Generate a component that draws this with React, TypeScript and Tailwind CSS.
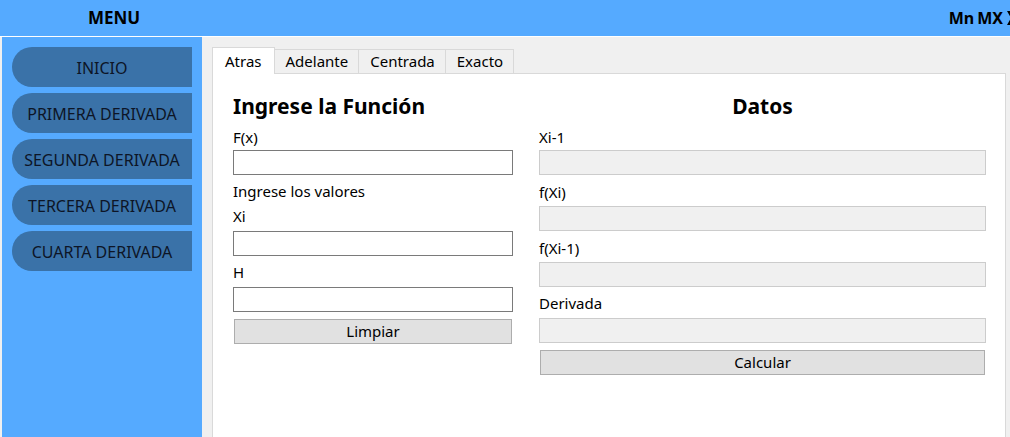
import React from "react";

const font = { fontFamily: '"Noto Sans", "Open Sans", sans-serif' };

function Field({ label, mt, labelMt, readOnly }: { label: string; mt: string; labelMt: string; readOnly?: boolean }) {
  return (
    <>
      <div className={`h-[22px] leading-[22px] text-[15px] text-black ${labelMt}`}>{label}</div>
      <div
        className={`h-[25px] ${mt} ${readOnly ? "bg-[#f0f0f0] border border-[#cccccc]" : "bg-white border border-[#7a7a7a]"}`}
      />
    </>
  );
}

export default function App() {
  const menu = ["INICIO", "PRIMERA DERIVADA", "SEGUNDA DERIVADA", "TERCERA DERIVADA", "CUARTA DERIVADA"];
  const tabs = ["Atras", "Adelante", "Centrada", "Exacto"];
  return (
    <div className="w-[1010px] h-[437px] overflow-hidden flex flex-col bg-[#f0f0f0]" style={font}>
      {/* header */}
      <div className="h-[36px] bg-[#55aaff] flex items-center shrink-0 overflow-hidden">
        <div className="w-[228px] text-center font-bold text-[17px] text-black">MENU</div>
        <div className="flex-1" />
        <div className="flex items-center gap-[3px] font-bold text-[16px] text-black whitespace-nowrap mr-[-5px]">
          <span>Mn</span>
          <span>MX</span>
          <svg width="8" height="16" viewBox="0 0 8 16" className="ml-px shrink-0">
            <path d="M0 1 L4 1 L8 8 L4 15 L0 15 L4 8 Z" fill="#000" />
          </svg>
        </div>
      </div>
      <div className="h-px bg-white shrink-0" />
      {/* body */}
      <div className="flex-1 flex min-h-0">
        <div className="w-[2px] bg-[#f0f0f0]" />
        <div className="w-[200px] bg-[#55aaff] pt-[10px] pl-[10px] flex flex-col gap-[6px]">
          {menu.map((m) => (
            <div
              key={m}
              className="w-[180px] h-[40px] pt-px rounded-l-[20px] bg-[#3a72a8] flex items-center justify-center text-[16px] text-[#0d1526]"
            >
              {m}
            </div>
          ))}
        </div>
        <div className="flex-1 pl-[10px] pt-[10px] pr-[4px] flex flex-col">
          {/* tabs */}
          <div className="flex items-end h-[26px] relative z-10">
            {tabs.map((t, i) =>
              i === 0 ? (
                <div
                  key={t}
                  className="h-[27px] px-[12px] bg-white border border-b-0 border-[#d9d9d9] flex items-center text-[15px] text-black -mb-px"
                >
                  {t}
                </div>
              ) : (
                <div
                  key={t}
                  className="h-[24px] pl-[11px] pr-[10px] bg-[#f0f0f0] border border-l-0 border-b-0 border-[#d9d9d9] flex items-center text-[15px] text-black"
                >
                  {t}
                </div>
              )
            )}
          </div>
          {/* panel */}
          <div className="flex-1 bg-white border border-[#d9d9d9] border-b-0 pl-[20px] pr-[19px] pt-[20px] flex gap-[26px]">
            <div className="w-[280px] flex flex-col">
              <div className="h-[24px] leading-[24px] font-bold text-[21px] text-black">Ingrese la Función</div>
              <Field label="F(x)" labelMt="mt-[8px]" mt="mt-[2px]" />
              <div className="h-[22px] leading-[22px] text-[15px] text-black mt-[5px]">Ingrese los valores</div>
              <Field label="Xi" labelMt="mt-[3px]" mt="mt-[4px]" />
              <Field label="H" labelMt="mt-[5px]" mt="mt-[4px]" />
              <div className="mt-[7px] mx-px h-[25px] bg-[#e1e1e1] border border-[#adadad] flex items-center justify-center text-[15px] text-black">
                Limpiar
              </div>
            </div>
            <div className="flex-1 flex flex-col">
              <div className="h-[24px] leading-[24px] font-bold text-[21px] text-black text-center">Datos</div>
              <Field label="Xi-1" labelMt="mt-[8px]" mt="mt-[2px]" readOnly />
              <Field label="f(Xi)" labelMt="mt-[6px]" mt="mt-[3px]" readOnly />
              <Field label="f(Xi-1)" labelMt="mt-[6px]" mt="mt-[3px]" readOnly />
              <Field label="Derivada" labelMt="mt-[5px]" mt="mt-[4px]" readOnly />
              <div className="mt-[7px] mx-px h-[25px] bg-[#e1e1e1] border border-[#adadad] flex items-center justify-center text-[15px] text-black">
                Calcular
              </div>
            </div>
          </div>
        </div>
      </div>
    </div>
  );
}
